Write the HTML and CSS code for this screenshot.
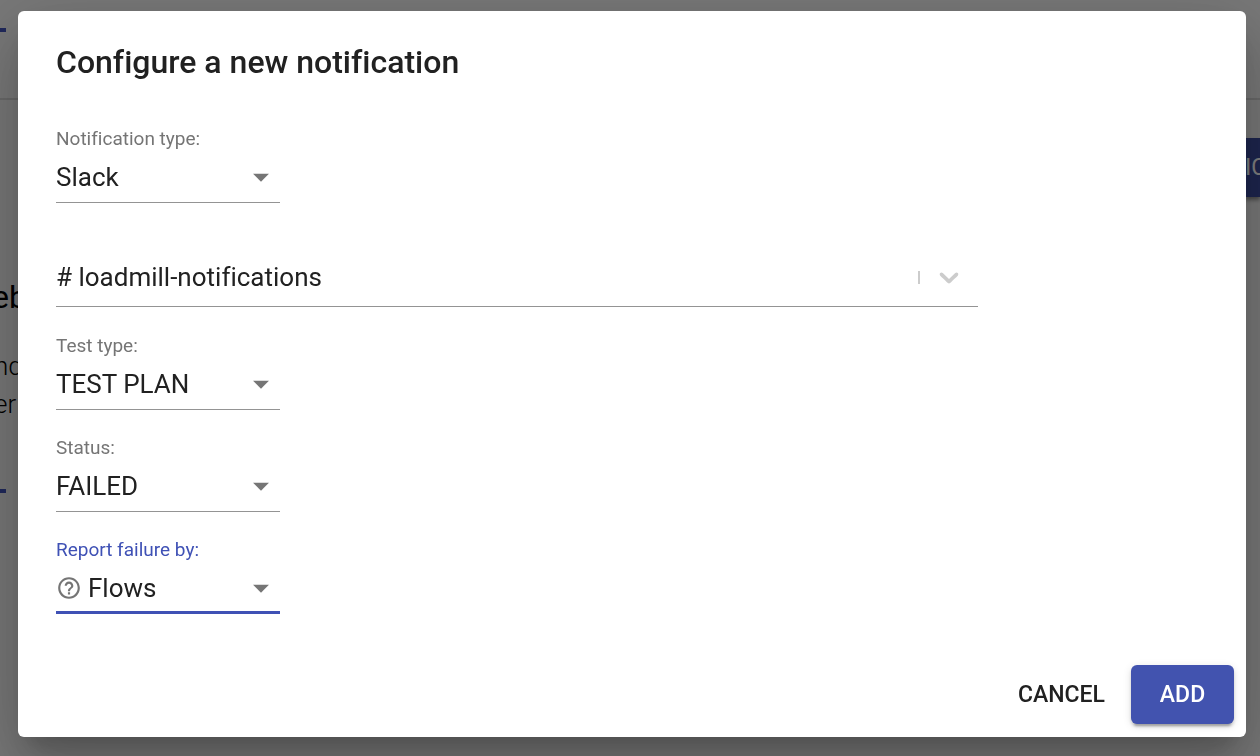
FILE: index.html
```html
<!DOCTYPE html>
<html lang="en">
<head>
<meta charset="utf-8">
<title>Configure a new notification</title>
<link rel="stylesheet" href="styles.css">
</head>
<body>
<div class="page" aria-hidden="true">
  <header class="page-header"><span class="tab-line"></span></header>
  <main class="page-main">
    <div class="toolbar"><span class="page-button">IC</span></div>
    <div class="page-copy">
      <h2 class="page-title">eb</h2>
      <p class="page-text">nd<br>er</p>
      <span class="tab-line"></span>
    </div>
  </main>
</div>
<div class="backdrop">
  <form class="dialog" role="dialog" aria-modal="true" aria-labelledby="dialog-title">
    <h1 class="dialog-title" id="dialog-title">Configure a new notification</h1>
    <div class="dialog-content">
      <div class="field">
        <label class="label" for="type">Notification type:</label>
        <div class="control">
          <select class="select" id="type"><option>Slack</option></select>
          <svg class="arrow" viewBox="0 0 24 24"><path d="M7 10l5 5 5-5z"/></svg>
        </div>
      </div>
      <div class="control channel">
        <select class="select" id="channel" aria-label="Slack channel"><option># loadmill-notifications</option></select>
        <span class="channel-end">
          <span class="separator"></span>
          <svg class="chevron" viewBox="0 0 20 20"><path d="M4.516 7.548c0.436-0.446 1.043-0.481 1.576 0l3.908 3.747 3.908-3.747c0.533-0.481 1.141-0.446 1.574 0 0.436 0.445 0.408 1.197 0 1.615-0.406 0.418-4.695 4.502-4.695 4.502-0.217 0.223-0.502 0.335-0.787 0.335s-0.57-0.112-0.789-0.335c0 0-4.287-4.084-4.695-4.502s-0.436-1.17 0-1.615z"/></svg>
        </span>
      </div>
      <div class="field">
        <label class="label" for="test">Test type:</label>
        <div class="control">
          <select class="select" id="test"><option>TEST PLAN</option></select>
          <svg class="arrow" viewBox="0 0 24 24"><path d="M7 10l5 5 5-5z"/></svg>
        </div>
      </div>
      <div class="field">
        <label class="label" for="status">Status:</label>
        <div class="control">
          <select class="select" id="status"><option>FAILED</option></select>
          <svg class="arrow" viewBox="0 0 24 24"><path d="M7 10l5 5 5-5z"/></svg>
        </div>
      </div>
      <div class="field active">
        <label class="label" for="report">Report failure by:</label>
        <div class="control">
          <svg class="help" viewBox="0 0 24 24"><path d="M11 18h2v-2h-2v2zm1-16C6.48 2 2 6.48 2 12s4.480 10 10 10 10-4.480 10-10S17.520 2 12 2zm0 18c-4.410 0-8-3.590-8-8s3.590-8 8-8 8 3.590 8 8-3.590 8-8 8zm0-14c-2.210 0-4 1.790-4 4h2c0-1.100.9-2 2-2s2 .9 2 2c0 2-3 1.750-3 5h2c0-2.250 3-2.500 3-5 0-2.210-1.790-4-4-4z"/></svg>
          <select class="select" id="report"><option>Flows</option></select>
          <svg class="arrow" viewBox="0 0 24 24"><path d="M7 10l5 5 5-5z"/></svg>
        </div>
      </div>
    </div>
    <div class="dialog-actions">
      <button class="button" type="button">CANCEL</button>
      <button class="button primary" type="button">ADD</button>
    </div>
  </form>
</div>
</body>
</html>
```

FILE: styles.css
```css
* {
  box-sizing: border-box;
}

body {
  margin: 0;
  min-height: 100vh;
  overflow: hidden;
  background: #f0f0f0;
  color: #212121;
  font-family: Roboto, "Liberation Sans", sans-serif;
  font-variant-ligatures: none;
}

.page {
  color: #000;
}

.page-header {
  height: 100px;
  padding-top: 28px;
  border-bottom: 2px solid #d2d2d2;
}

.tab-line {
  display: block;
  width: 6px;
  height: 4px;
  background: #3f51b5;
}

.toolbar {
  display: flex;
  justify-content: flex-end;
  padding-top: 38px;
}

.page-button {
  width: 15px;
  height: 59px;
  background: #3a4a9c;
  box-shadow: 0 3px 4px rgba(0, 0, 0, 0.4);
  color: #fff;
  font-size: 23px;
  line-height: 59px;
}

.page-copy {
  width: 24px;
  padding-top: 80px;
}

.page-title {
  margin: 0 0 30px -8px;
  font-size: 32px;
  font-weight: 400;
  line-height: 40px;
}

.page-text {
  margin: 0 0 66px -6px;
  font-size: 26px;
  font-weight: 300;
  line-height: 38px;
}

.backdrop {
  position: fixed;
  inset: 0;
  display: flex;
  padding: 11px 14px 19px 18px;
  background: rgba(0, 0, 0, 0.5);
}

.dialog {
  display: flex;
  flex: 1;
  flex-direction: column;
  border-radius: 6px;
  background: #fff;
  box-shadow: 0 18px 24px -11px rgba(0, 0, 0, 0.2),
    0 38px 61px 5px rgba(0, 0, 0, 0.14),
    0 14px 74px 13px rgba(0, 0, 0, 0.12);
}

.dialog-title {
  margin: 0;
  padding: 26px 38px;
  font-size: 32px;
  font-weight: 500;
  line-height: 50px;
}

.dialog-content {
  display: flex;
  flex: 1;
  flex-direction: column;
  gap: 26px;
  padding: 14px 38px;
}

.field {
  width: 224px;
}

.label {
  display: block;
  color: #757575;
  font-size: 19px;
  line-height: 24px;
}

.control {
  position: relative;
  display: flex;
  align-items: center;
  height: 52px;
  border-bottom: 1px solid #949494;
}

.select {
  flex: 1;
  height: 100%;
  padding: 0;
  border: 0;
  outline: 0;
  appearance: none;
  background: transparent;
  color: #212121;
  font: 400 26px/32px Roboto, "Liberation Sans", sans-serif;
  font-variant-ligatures: none;
}

.arrow {
  position: absolute;
  right: 0;
  width: 38px;
  height: 38px;
  fill: #757575;
  pointer-events: none;
}

.channel {
  width: 80%;
  height: 59px;
  margin: 19px 0 1px;
}

.channel-end {
  position: absolute;
  right: 13px;
  display: flex;
  align-items: center;
  gap: 13px;
  pointer-events: none;
}

.separator {
  width: 2px;
  height: 13px;
  background: #ccc;
}

.chevron {
  width: 32px;
  height: 32px;
  fill: #ccc;
}

.active .label {
  color: #3f51b5;
}

.active .control {
  border-bottom-color: #3f51b5;
  box-shadow: inset 0 -2px #3f51b5;
}

.help {
  width: 26px;
  height: 26px;
  margin-right: 6px;
  fill: #757575;
}

.dialog-actions {
  display: flex;
  justify-content: flex-end;
  padding: 13px 12px;
}

.button {
  height: 59px;
  padding: 0 26px;
  border: 0;
  border-radius: 6px;
  background: transparent;
  color: #212121;
  font: 500 23px/40px Roboto, "Liberation Sans", sans-serif;
}

.primary {
  min-width: 103px;
  background: #4253af;
  box-shadow: 0 5px 2px -3px rgba(0, 0, 0, 0.2),
    0 3px 3px rgba(0, 0, 0, 0.14),
    0 2px 8px rgba(0, 0, 0, 0.12);
  color: #fff;
}
```
